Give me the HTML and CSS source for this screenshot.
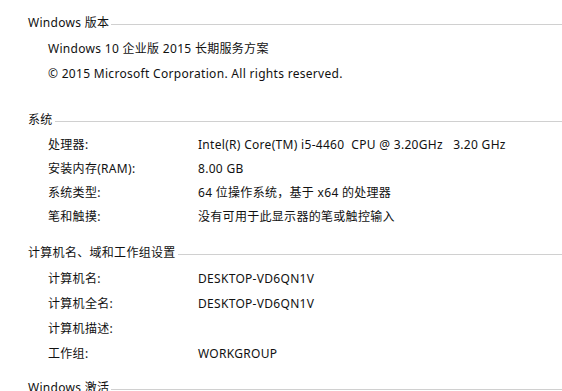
FILE: index.html
```html
<!DOCTYPE html>
<html lang="zh-CN">
<head>
  <meta charset="UTF-8">
  <title>系统</title>
  <link rel="stylesheet" href="styles.css">
</head>
<body>
  <section class="group first">
    <h2 class="group-title">Windows 版本</h2>
    <div class="rows">
      <div class="row"><span class="full">Windows 10 企业版 2015 长期服务方案</span></div>
      <div class="row"><span class="full">© 2015 Microsoft Corporation. All rights reserved.</span></div>
    </div>
  </section>

  <section class="group system">
    <h2 class="group-title">系统</h2>
    <div class="rows tight">
      <div class="row"><span class="label">处理器:</span><span class="value">Intel(R) Core(TM) i5-4460&nbsp; CPU @ 3.20GHz&nbsp;&nbsp; 3.20 GHz</span></div>
      <div class="row"><span class="label">安装内存(RAM):</span><span class="value">8.00 GB</span></div>
      <div class="row"><span class="label">系统类型:</span><span class="value">64 位操作系统，基于 x64 的处理器</span></div>
      <div class="row"><span class="label">笔和触摸:</span><span class="value">没有可用于此显示器的笔或触控输入</span></div>
    </div>
  </section>

  <section class="group computer">
    <h2 class="group-title">计算机名、域和工作组设置</h2>
    <div class="rows">
      <div class="row"><span class="label">计算机名:</span><span class="value">DESKTOP-VD6QN1V</span></div>
      <div class="row"><span class="label">计算机全名:</span><span class="value">DESKTOP-VD6QN1V</span></div>
      <div class="row"><span class="label">计算机描述:</span><span class="value"></span></div>
      <div class="row"><span class="label">工作组:</span><span class="value">WORKGROUP</span></div>
    </div>
  </section>

  <section class="group activation">
    <h2 class="group-title">Windows 激活</h2>
  </section>
</body>
</html>
```

FILE: styles.css
```css
* {
  padding: 0;
  margin: 0;
  box-sizing: border-box;
}

body {
  background: #ffffff;
  color: #111111;
  font-family: 'Noto Sans', 'Noto Sans CJK SC', sans-serif;
  font-size: 12px;
  letter-spacing: 0.3px;
  padding: 10px 0 0 28px;
  overflow: hidden;
}

.group-title {
  display: flex;
  align-items: center;
  height: 24px;
  font-size: 12px;
  font-weight: normal;
}

/* rule that runs from the title to the window edge */
.group-title::after {
  content: '';
  flex: 1;
  margin-left: 2px;
  margin-top: 4px;
  border-top: 1px solid #d0d0d0;
}

.system { margin-top: 21px; }
.computer { margin-top: 11px; }
.activation { margin-top: 9px; }

.rows {
  padding-left: 20px;
  margin-top: 2px;
}

.row {
  display: grid;
  grid-template-columns: 150px 1fr;
  height: 25px;
  line-height: 25px;
  white-space: nowrap;
}

.rows.tight .row {
  height: 24px;
  line-height: 24px;
}

.full {
  grid-column: 1 / 3;
}
```
